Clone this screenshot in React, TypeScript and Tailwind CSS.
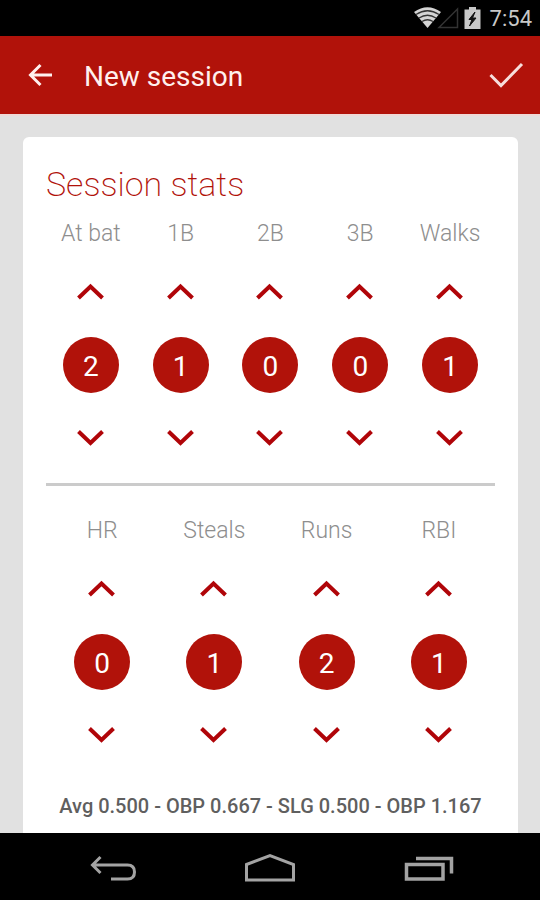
import { useState } from "react";

interface Stat {
  id: string;
  label: string;
  value: number;
}

const HITTING: Stat[] = [
  { id: "at-bat", label: "At bat", value: 2 },
  { id: "single", label: "1B", value: 1 },
  { id: "double", label: "2B", value: 0 },
  { id: "triple", label: "3B", value: 0 },
  { id: "walks", label: "Walks", value: 1 },
];

const RUNNING: Stat[] = [
  { id: "hr", label: "HR", value: 0 },
  { id: "steals", label: "Steals", value: 1 },
  { id: "runs", label: "Runs", value: 2 },
  { id: "rbi", label: "RBI", value: 1 },
];

function Chevron({ up = false }: { up?: boolean }) {
  return (
    <svg width="28" height="18" viewBox="0 0 28 18" fill="none" stroke="#b00509" strokeWidth="4" aria-hidden="true">
      <path d={up ? "M1.500 15 13.500 3.500l12 11.500" : "M1.500 2.500 13.500 14l12-11.500"} />
    </svg>
  );
}

function StatStepper({ stat }: { stat: Stat }) {
  const [value, setValue] = useState(stat.value);

  return (
    <div role="group" aria-labelledby={stat.id} className="flex flex-1 flex-col items-center">
      <span id={stat.id} className="text-[23px] leading-[38px] font-light text-[#8e8e8e]">
        {stat.label}
      </span>
      <button
        type="button"
        aria-label={`Increase ${stat.label}`}
        onClick={() => setValue(value + 1)}
        className="flex h-[78px] w-full items-center justify-center"
      >
        <Chevron up />
      </button>
      <output className="my-1.5 flex size-14 items-center justify-center rounded-full bg-[#b1120a] pt-1 text-[28px] text-white">
        {value}
      </output>
      <button
        type="button"
        aria-label={`Decrease ${stat.label}`}
        onClick={() => setValue(Math.max(0, value - 1))}
        className="flex h-[78px] w-full items-center justify-center"
      >
        <Chevron />
      </button>
    </div>
  );
}

function StatusBar() {
  return (
    <div className="flex h-9 items-center justify-end bg-black pr-2 text-[22px] text-[#c8c8c8]">
      <svg width="70" height="24" viewBox="0 0 70 24" className="mr-1.5" aria-hidden="true">
        {/* wifi */}
        <path d="M0 6Q13.500-3.500 27 6L13.500 22Z" fill="#d4d4d4" />
        <path
          d="M2 8.500Q13.500 1 25 8.500M5 12Q13.500 6.500 22 12M8 15.500Q13.500 12 19 15.500"
          fill="none"
          stroke="#333"
          strokeWidth="1.300"
        />
        {/* cell signal */}
        <path d="M43.500 3v18.500H25Z" fill="none" stroke="#333" strokeWidth="1.500" />
        {/* battery */}
        <path d="M55 1h7v2.500h4.500V23h-16V3.500H55Z" fill="#c8c8c8" />
        <path d="m61 6-6 7.500h3L55.500 20l6.500-8h-3.500Z" fill="#111" stroke="#111" />
      </svg>
      <span>7:54</span>
    </div>
  );
}

function AppBar() {
  return (
    <header className="flex h-[80px] items-center border-b-2 border-[#efd9d7] bg-[#b1120a] px-4 text-[#fff0ee]">
      <button type="button" aria-label="Back" className="flex size-12 items-center justify-center">
        <svg width="26" height="24" viewBox="0 0 26 24" fill="none" stroke="currentColor" strokeWidth="3" aria-hidden="true">
          <path d="M25 12H4M13.500 2 3.500 12l10 10" />
        </svg>
      </button>
      <h1 className="ml-5 flex-1 pt-1 text-[28px]">New session</h1>
      <button type="button" aria-label="Save session" className="flex h-12 w-9 items-center justify-center">
        <svg width="36" height="26" viewBox="0 0 36 26" fill="none" stroke="#f7dedc" strokeWidth="3" aria-hidden="true">
          <path d="M2.500 13 13 23.500 34 2" />
        </svg>
      </button>
    </header>
  );
}

function NavBar() {
  return (
    <nav className="flex h-[67px] items-center justify-center bg-black pt-0.5">
      <button type="button" aria-label="Back" className="flex h-full w-[157px] items-center justify-center">
        <svg width="48" height="28" viewBox="0 0 48 28" fill="none" stroke="#a3a3a3" strokeWidth="3" aria-hidden="true">
          <path d="M11.500 3 3.500 11l8 8M3.500 11h35q7 0 7 7t-7 7H22" />
        </svg>
      </button>
      <button type="button" aria-label="Home" className="flex h-full w-[157px] items-center justify-center">
        <svg width="52" height="30" viewBox="0 0 52 30" fill="none" stroke="#a3a3a3" strokeWidth="3" aria-hidden="true">
          <path d="M2.500 11.500 26 2.500l23.500 9v15.500h-47Z" />
        </svg>
      </button>
      <button type="button" aria-label="Recent apps" className="flex h-full w-[157px] items-center justify-center">
        <svg width="54" height="28" viewBox="0 0 54 28" fill="none" stroke="#a3a3a3" strokeWidth="3.500" aria-hidden="true">
          <path d="M6.500 10.500h36.500v14.500H6.500ZM16 4.500h35.500v15" />
        </svg>
      </button>
    </nav>
  );
}

export default function App() {
  return (
    <div className="flex min-h-screen flex-col bg-[#e1e1e1] font-[Roboto,sans-serif]">
      <StatusBar />
      <AppBar />

      <main className="flex flex-1 flex-col pt-[21px] pr-[22px] pl-[23px]">
        <section className="flex-1 rounded-t-md bg-white px-[23px] pt-6 pb-3">
          <h2 className="mb-2 text-[34px] leading-[46px] font-extralight text-[#b1120a]">Session stats</h2>
          <div className="flex">
            {HITTING.map((stat) => (
              <StatStepper key={stat.id} stat={stat} />
            ))}
          </div>
          <hr className="mt-1.5 mb-[26px] border-t-[3px] border-[#cbcbcb]" />
          <div className="flex">
            {RUNNING.map((stat) => (
              <StatStepper key={stat.id} stat={stat} />
            ))}
          </div>
          <p className="mt-[18px] text-center text-[20px] leading-7 font-medium whitespace-nowrap text-[#5f5f5f]">
            Avg 0.500 - OBP 0.667 - SLG 0.500 - OBP 1.167
          </p>
        </section>
      </main>

      <NavBar />
    </div>
  );
}
